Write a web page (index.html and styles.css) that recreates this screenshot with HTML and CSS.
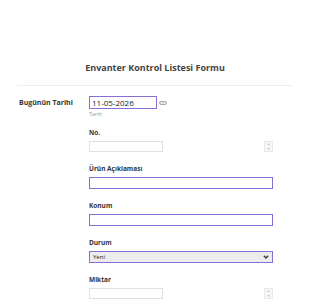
FILE: index.html
```html
<!DOCTYPE html>
<html lang="tr">
<head>
    <meta charset="UTF-8">
    <meta name="viewport" content="width=device-width, initial-scale=1.0">
    <title>Envanter Kontrol Listesi Formu</title>
    <link rel="stylesheet" href="styles.css">
</head>
<body>
    <div class="form">
        <h2 class="baslik">Envanter Kontrol Listesi Formu</h2>

        <div class="satir">
            <label class="yan-etiket" for="tarih">Bugünün Tarihi</label>
            <div class="alan">
                <div class="tarih-grup">
                    <input type="text" id="tarih" class="girdi tarih" value="11-05-2026">
                    <span class="takvim"></span>
                </div>
                <span class="ipucu">Tarih</span>
            </div>
        </div>

        <div class="blok">
            <label class="etiket" for="no">No.</label>
            <div class="sayi-grup">
                <input type="text" id="no" class="girdi kisa">
                <span class="dondurucu"><i>&#9650;</i><i>&#9660;</i></span>
            </div>
        </div>

        <div class="blok">
            <label class="etiket" for="aciklama">Ürün Açıklaması</label>
            <input type="text" id="aciklama" class="girdi genis">
        </div>

        <div class="blok">
            <label class="etiket" for="konum">Konum</label>
            <input type="text" id="konum" class="girdi genis">
        </div>

        <div class="blok">
            <label class="etiket" for="durum">Durum</label>
            <div class="secim">
                <span>Yeni</span>
                <svg width="6" height="4" viewBox="0 0 6 4"><path d="M0.8 0.8 L3 3 L5.2 0.8" fill="none" stroke="#333" stroke-width="1.3"/></svg>
            </div>
        </div>

        <div class="blok">
            <label class="etiket" for="miktar">Miktar</label>
            <div class="sayi-grup">
                <input type="text" id="miktar" class="girdi kisa">
                <span class="dondurucu"><i>&#9650;</i><i>&#9660;</i></span>
            </div>
        </div>
    </div>
</body>
</html>
```

FILE: styles.css
```css
* {
    margin: 0;
    padding: 0;
    box-sizing: border-box;
    font-family: "Open Sans", "Noto Sans", sans-serif;
}

body {
    background-color: #fff;
    color: #333;
}

.form {
    width: 276px;
    margin: 0 0 0 17px;
    padding-top: 61px;
}

.baslik {
    font-size: 9px;
    line-height: 14px;
    font-weight: 700;
    color: #444;
    text-align: center;
    padding-bottom: 10px;
    border-bottom: 1px solid #eee;
}

.satir {
    display: flex;
    margin-top: 10px;
}

.yan-etiket {
    width: 72px;
    padding-left: 2px;
    padding-top: 2px;
    font-size: 7px;
    line-height: 10px;
    font-weight: 700;
    color: #333;
}

.alan {
    display: flex;
    flex-direction: column;
}

.tarih-grup {
    display: flex;
    align-items: center;
    gap: 2px;
}

.girdi {
    display: block;
    height: 12px;
    border: 1px solid #ddd;
    background: #fff;
    font-size: 8px;
    color: #222;
    padding: 0 2px;
    outline: none;
}

.tarih {
    width: 68px;
    height: 13px;
    border: 1.3px solid #8a6dd3;
}

.takvim {
    width: 8px;
    height: 4px;
    border: 1px solid #aaa;
    border-radius: 2px;
    background: #e4e4e4;
}

.ipucu {
    font-size: 5.5px;
    line-height: 8px;
    color: #999;
    margin-top: 1px;
}

.blok {
    margin-left: 72px;
    margin-top: 10px;
}

.blok + .blok {
    margin-top: 12px;
}

.etiket {
    display: block;
    font-size: 6.5px;
    line-height: 10px;
    font-weight: 700;
    color: #333;
    margin-bottom: 3px;
}

.genis {
    width: 184px;
    height: 12px;
    border: 1.3px solid #8a6dd3;
}

.sayi-grup {
    width: 184px;
    display: flex;
    justify-content: space-between;
    align-items: center;
}

.kisa {
    width: 74px;
    height: 11px;
    border-color: #e0e0e0;
}

.dondurucu {
    width: 9px;
    height: 11px;
    display: flex;
    flex-direction: column;
    border: 1px solid #e8e8e8;
    background: #f7f7f7;
}

.dondurucu i {
    flex: 1;
    font-style: normal;
    font-size: 3px;
    line-height: 4.5px;
    color: #aaa;
    text-align: center;
}

.secim {
    width: 184px;
    height: 12px;
    border: 1.3px solid #8a6dd3;
    background: #ececec;
    display: flex;
    align-items: center;
    justify-content: space-between;
    padding: 0 3px 0 3px;
    font-size: 6px;
    color: #222;
}
```
